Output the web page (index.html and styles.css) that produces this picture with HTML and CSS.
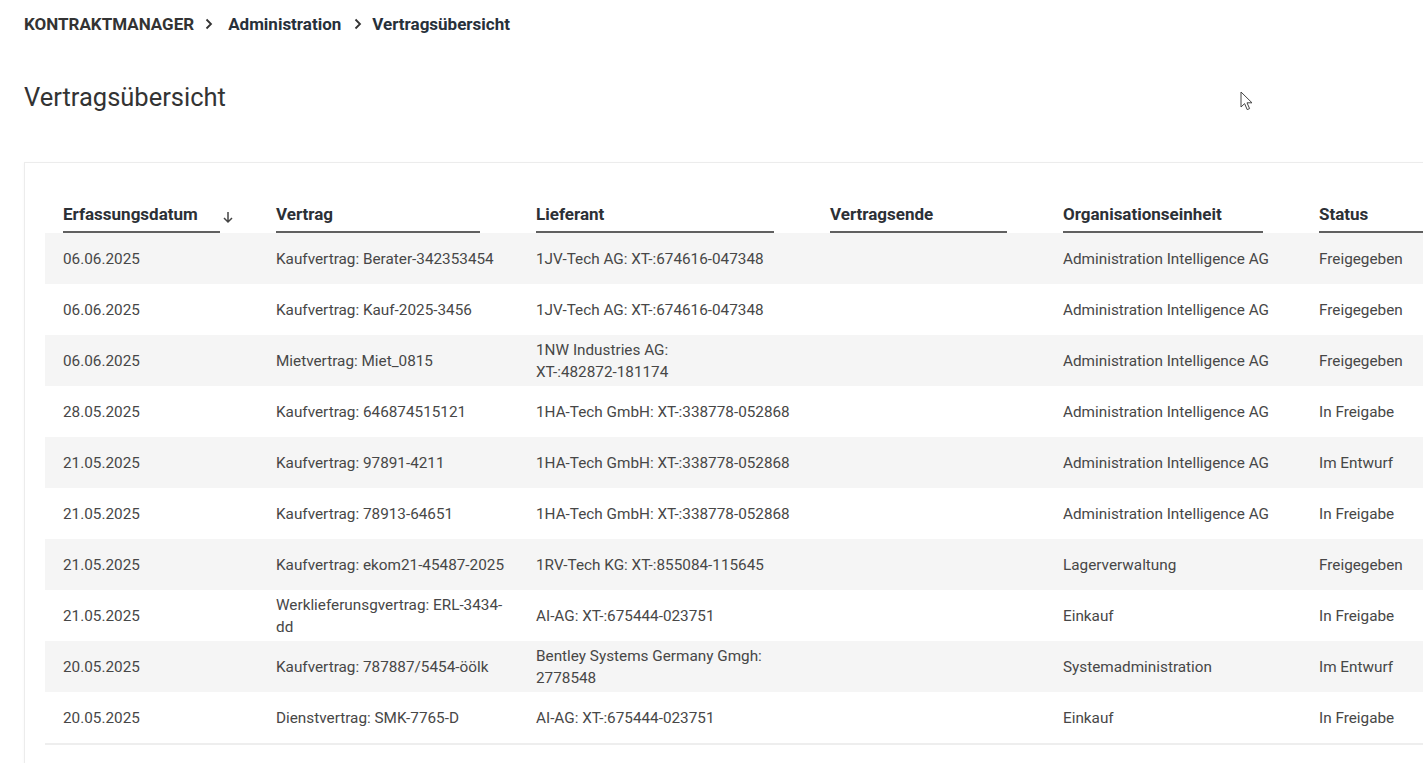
FILE: index.html
```html
<!DOCTYPE html>
<html lang="de">
<head>
<meta charset="utf-8">
<title>Vertragsübersicht</title>
<link rel="stylesheet" href="styles.css">
</head>
<body>
<div class="page">
  <nav class="breadcrumb">
    <span class="crumb root">KONTRAKTMANAGER</span>
    <svg class="chev" viewBox="0 0 10 12" width="10" height="12"><path d="M2.5 1.5 L7 6 L2.5 10.5" fill="none" stroke="#333" stroke-width="1.8"/></svg>
    <span class="crumb">Administration</span>
    <svg class="chev chev-2" viewBox="0 0 10 12" width="10" height="12"><path d="M2.5 1.5 L7 6 L2.5 10.5" fill="none" stroke="#333" stroke-width="1.8"/></svg>
    <span class="crumb">Vertragsübersicht</span>
  </nav>

  <h1 class="title">Vertragsübersicht</h1>

  <section class="card">
    <div class="table">
      <div class="row head">
        <div class="th th-sort"><span class="label">Erfassungsdatum</span><span class="sort"><svg viewBox="0 0 12 14" width="12" height="14"><path d="M6 2 V12 M2 8 L6 12 L10 8" fill="none" stroke="#444" stroke-width="1.5"/></svg></span></div>
        <div class="th"><span class="label">Vertrag</span></div>
        <div class="th"><span class="label">Lieferant</span></div>
        <div class="th"><span class="label">Vertragsende</span></div>
        <div class="th"><span class="label">Organisationseinheit</span></div>
        <div class="th"><span class="label">Status</span></div>
      </div>

      <div class="row">
        <div class="td">06.06.2025</div>
        <div class="td">Kaufvertrag: Berater-342353454</div>
        <div class="td">1JV-Tech AG: XT-:674616-047348</div>
        <div class="td"></div>
        <div class="td">Administration Intelligence AG</div>
        <div class="td">Freigegeben</div>
      </div>
      <div class="row">
        <div class="td">06.06.2025</div>
        <div class="td">Kaufvertrag: Kauf-2025-3456</div>
        <div class="td">1JV-Tech AG: XT-:674616-047348</div>
        <div class="td"></div>
        <div class="td">Administration Intelligence AG</div>
        <div class="td">Freigegeben</div>
      </div>
      <div class="row">
        <div class="td">06.06.2025</div>
        <div class="td">Mietvertrag: Miet_0815</div>
        <div class="td">1NW Industries AG:<br>XT-:482872-181174</div>
        <div class="td"></div>
        <div class="td">Administration Intelligence AG</div>
        <div class="td">Freigegeben</div>
      </div>
      <div class="row">
        <div class="td">28.05.2025</div>
        <div class="td">Kaufvertrag: 646874515121</div>
        <div class="td">1HA-Tech GmbH: XT-:338778-052868</div>
        <div class="td"></div>
        <div class="td">Administration Intelligence AG</div>
        <div class="td">In Freigabe</div>
      </div>
      <div class="row">
        <div class="td">21.05.2025</div>
        <div class="td">Kaufvertrag: 97891-4211</div>
        <div class="td">1HA-Tech GmbH: XT-:338778-052868</div>
        <div class="td"></div>
        <div class="td">Administration Intelligence AG</div>
        <div class="td">Im Entwurf</div>
      </div>
      <div class="row">
        <div class="td">21.05.2025</div>
        <div class="td">Kaufvertrag: 78913-64651</div>
        <div class="td">1HA-Tech GmbH: XT-:338778-052868</div>
        <div class="td"></div>
        <div class="td">Administration Intelligence AG</div>
        <div class="td">In Freigabe</div>
      </div>
      <div class="row">
        <div class="td">21.05.2025</div>
        <div class="td">Kaufvertrag: ekom21-45487-2025</div>
        <div class="td">1RV-Tech KG: XT-:855084-115645</div>
        <div class="td"></div>
        <div class="td">Lagerverwaltung</div>
        <div class="td">Freigegeben</div>
      </div>
      <div class="row">
        <div class="td">21.05.2025</div>
        <div class="td">Werklieferunsgvertrag: ERL-3434-<br>dd</div>
        <div class="td">AI-AG: XT-:675444-023751</div>
        <div class="td"></div>
        <div class="td">Einkauf</div>
        <div class="td">In Freigabe</div>
      </div>
      <div class="row">
        <div class="td">20.05.2025</div>
        <div class="td">Kaufvertrag: 787887/5454-öölk</div>
        <div class="td">Bentley Systems Germany Gmgh:<br>2778548</div>
        <div class="td"></div>
        <div class="td">Systemadministration</div>
        <div class="td">Im Entwurf</div>
      </div>
      <div class="row">
        <div class="td">20.05.2025</div>
        <div class="td">Dienstvertrag: SMK-7765-D</div>
        <div class="td">AI-AG: XT-:675444-023751</div>
        <div class="td"></div>
        <div class="td">Einkauf</div>
        <div class="td">In Freigabe</div>
      </div>
    </div>
  </section>

  <svg class="cursor" viewBox="0 0 14 21" width="14" height="21"><path d="M1 1 L1 16 L4.6 12.6 L7.2 18.6 L9.6 17.6 L7 11.8 L12 11.8 Z" fill="#fff" stroke="#444" stroke-width="1" stroke-linejoin="round"/></svg>
</div>
</body>
</html>
```

FILE: styles.css
```css
html, body {
  margin: 0;
  padding: 0;
  background: #ffffff;
  overflow: hidden;
}

body {
  font-family: Roboto, "Liberation Sans", Arial, sans-serif;
  color: #444;
  width: 1423px;
  height: 763px;
}

.page {
  position: relative;
  height: 763px;
  overflow: hidden;
}

.breadcrumb {
  display: flex;
  align-items: center;
  padding: 14px 0 0 24px;
  height: 20px;
  font-size: 17px;
  font-weight: 700;
  line-height: 20px;
}

.crumb {
  color: #27303a;
}

.crumb.root {
  color: #333;
}

.chev {
  margin: 0 14px 0 10px;
  flex: none;
}

.chev-2 {
  margin: 0 9px 0 12px;
}

.title {
  margin: 47px 0 0 24px;
  font-size: 25.5px;
  font-weight: 400;
  line-height: 32px;
  color: #333;
}

.card {
  margin: 49px 0 0 24px;
  width: 1460px;
  border: 1px solid #ececec;
  border-right: none;
  padding: 41px 0 60px 20px;
  box-shadow: 0 1px 3px rgba(0, 0, 0, 0.04);
}

.table {
  border-bottom: 2px solid #eeeeee;
  width: 1436px;
}

.row {
  display: grid;
  grid-template-columns: 213px 260px 294px 233px 256px 180px;
  height: 51px;
}

.row:nth-child(even) {
  background: #f5f5f5;
}

.row.head {
  height: auto;
  background: transparent;
}

.th {
  padding: 0 38px 0 18px;
  display: flex;
  align-items: flex-start;
  font-size: 17px;
  font-weight: 700;
  line-height: 20px;
  color: #2c3036;
}

.th .label {
  flex: 1;
  padding-bottom: 7px;
  border-bottom: 2px solid #606060;
  white-space: nowrap;
}

.th.th-sort {
  padding-right: 22px;
}

.sort {
  width: 16px;
  height: 20px;
  display: flex;
  align-items: center;
  justify-content: center;
  padding-top: 3px;
}

.td {
  display: flex;
  align-items: center;
  padding: 0 8px 0 18px;
  font-size: 15.3px;
  line-height: 22px;
  color: #474747;
}

.cursor {
  position: absolute;
  left: 1240px;
  top: 91px;
}
```
